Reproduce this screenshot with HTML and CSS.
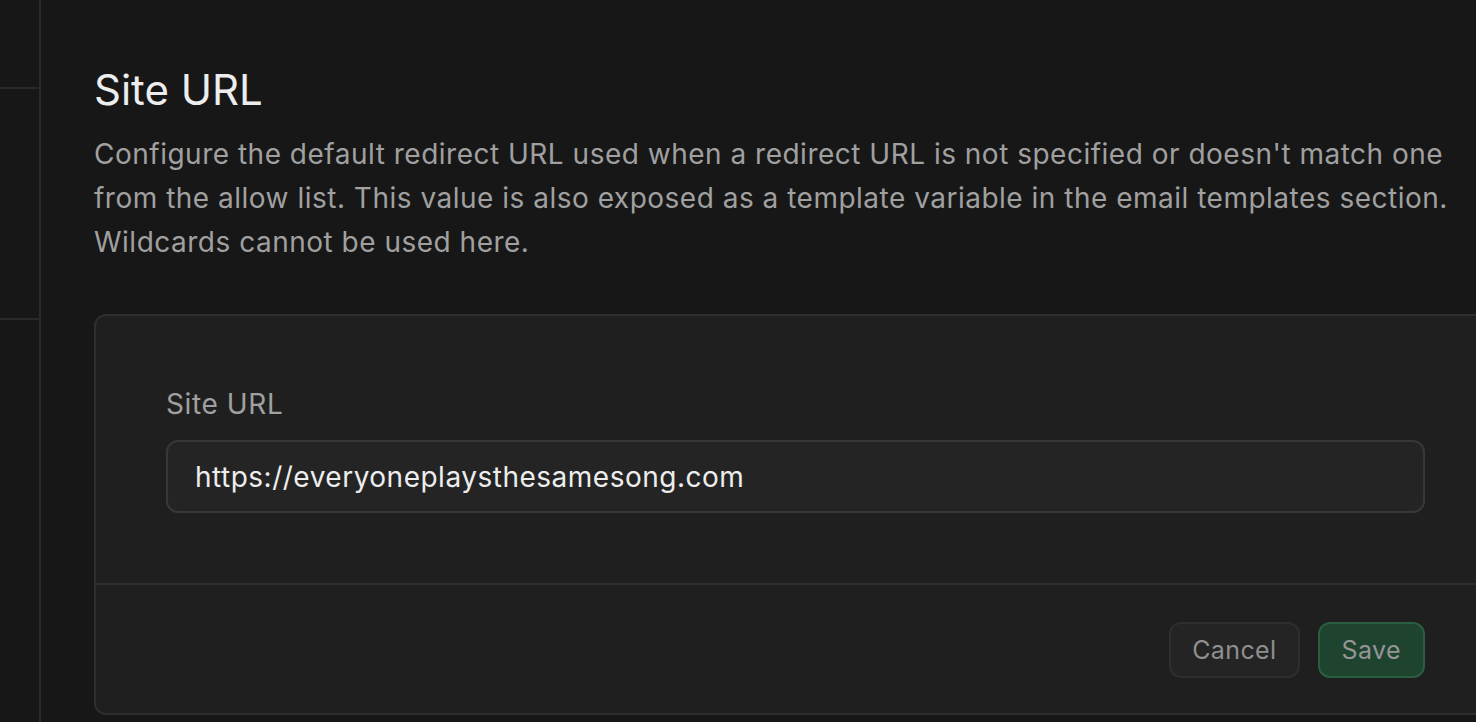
FILE: index.html
```html
<!DOCTYPE html>
<html>
<head>
<meta charset="utf-8">
<link rel="stylesheet" href="styles.css">
</head>
<body>
<div class="app">
  <aside class="sidebar">
    <div class="side-top"></div>
    <div class="side-mid"></div>
  </aside>
  <main class="main">
    <h1 class="title">Site URL</h1>
    <p class="desc">Configure the default redirect URL used when a redirect URL is not specified or doesn't match one from the allow list. This value is also exposed as a template variable in the email templates section. Wildcards cannot be used here.</p>
    <section class="card">
      <div class="card-body">
        <label class="label">Site URL</label>
        <div class="input">https://everyoneplaysthesamesong.com</div>
      </div>
      <div class="card-footer">
        <button class="btn btn-cancel">Cancel</button>
        <button class="btn btn-save">Save</button>
      </div>
    </section>
  </main>
</div>
</body>
</html>
```

FILE: styles.css
```css
html, body {
  margin: 0;
  padding: 0;
  background: #171717;
  height: 100%;
  overflow: hidden;
}
.app {
  display: flex;
  height: 722px;
  font-family: Inter, "Noto Sans", sans-serif;
}
.sidebar {
  width: 39px;
  flex: none;
  border-right: 2px solid #2a2a2a;
  display: flex;
  flex-direction: column;
}
.side-top {
  height: 87px;
  border-bottom: 2px solid #2a2a2a;
}
.side-mid {
  height: 229px;
  border-bottom: 2px solid #2a2a2a;
}
.main {
  flex: none;
  width: 1500px;
  padding-left: 53px;
  box-sizing: border-box;
}
.title {
  margin: 66px 0 0 0;
  font-size: 42px;
  line-height: 48px;
  font-weight: 400;
  color: #ededed;
}
.desc {
  margin: 18px 0 0 0;
  width: 1365px;
  font-size: 28px;
  letter-spacing: 0.5px;
  line-height: 44px;
  color: #a0a0a0;
}
.card {
  margin-top: 50px;
  width: 1403px;
  background: #1f1f1f;
  border: 2px solid #2e2e2e;
  border-radius: 12px;
  box-sizing: border-box;
}
.card-body {
  padding: 70px 70px 70px 70px;
  border-bottom: 2px solid #2e2e2e;
  display: flex;
  flex-direction: column;
}
.label {
  font-size: 28px;
  letter-spacing: 0.6px;
  line-height: 36px;
  color: #a0a0a0;
  margin-bottom: 18px;
}
.input {
  height: 73px;
  box-sizing: border-box;
  border: 2px solid #383838;
  background: #242424;
  border-radius: 12px;
  padding: 0 27px;
  display: flex;
  align-items: center;
  font-size: 28px;
  letter-spacing: 0.5px;
  color: #ededed;
}
.card-footer {
  display: flex;
  justify-content: flex-end;
  gap: 18px;
  padding: 37px 70px 35px 70px;
}
.btn {
  height: 56px;
  box-sizing: border-box;
  border-radius: 12px;
  font-family: inherit;
  font-size: 25px;
  letter-spacing: 0.4px;
  color: #8f8f8f;
  padding: 0 21px;
  cursor: pointer;
}
.btn-cancel {
  background: #242424;
  border: 2px solid #2e2e2e;
}
.btn-save {
  background: #1e4430;
  border: 2px solid #2a5e40;
  color: #959595;
  padding: 0 22px;
}
```
